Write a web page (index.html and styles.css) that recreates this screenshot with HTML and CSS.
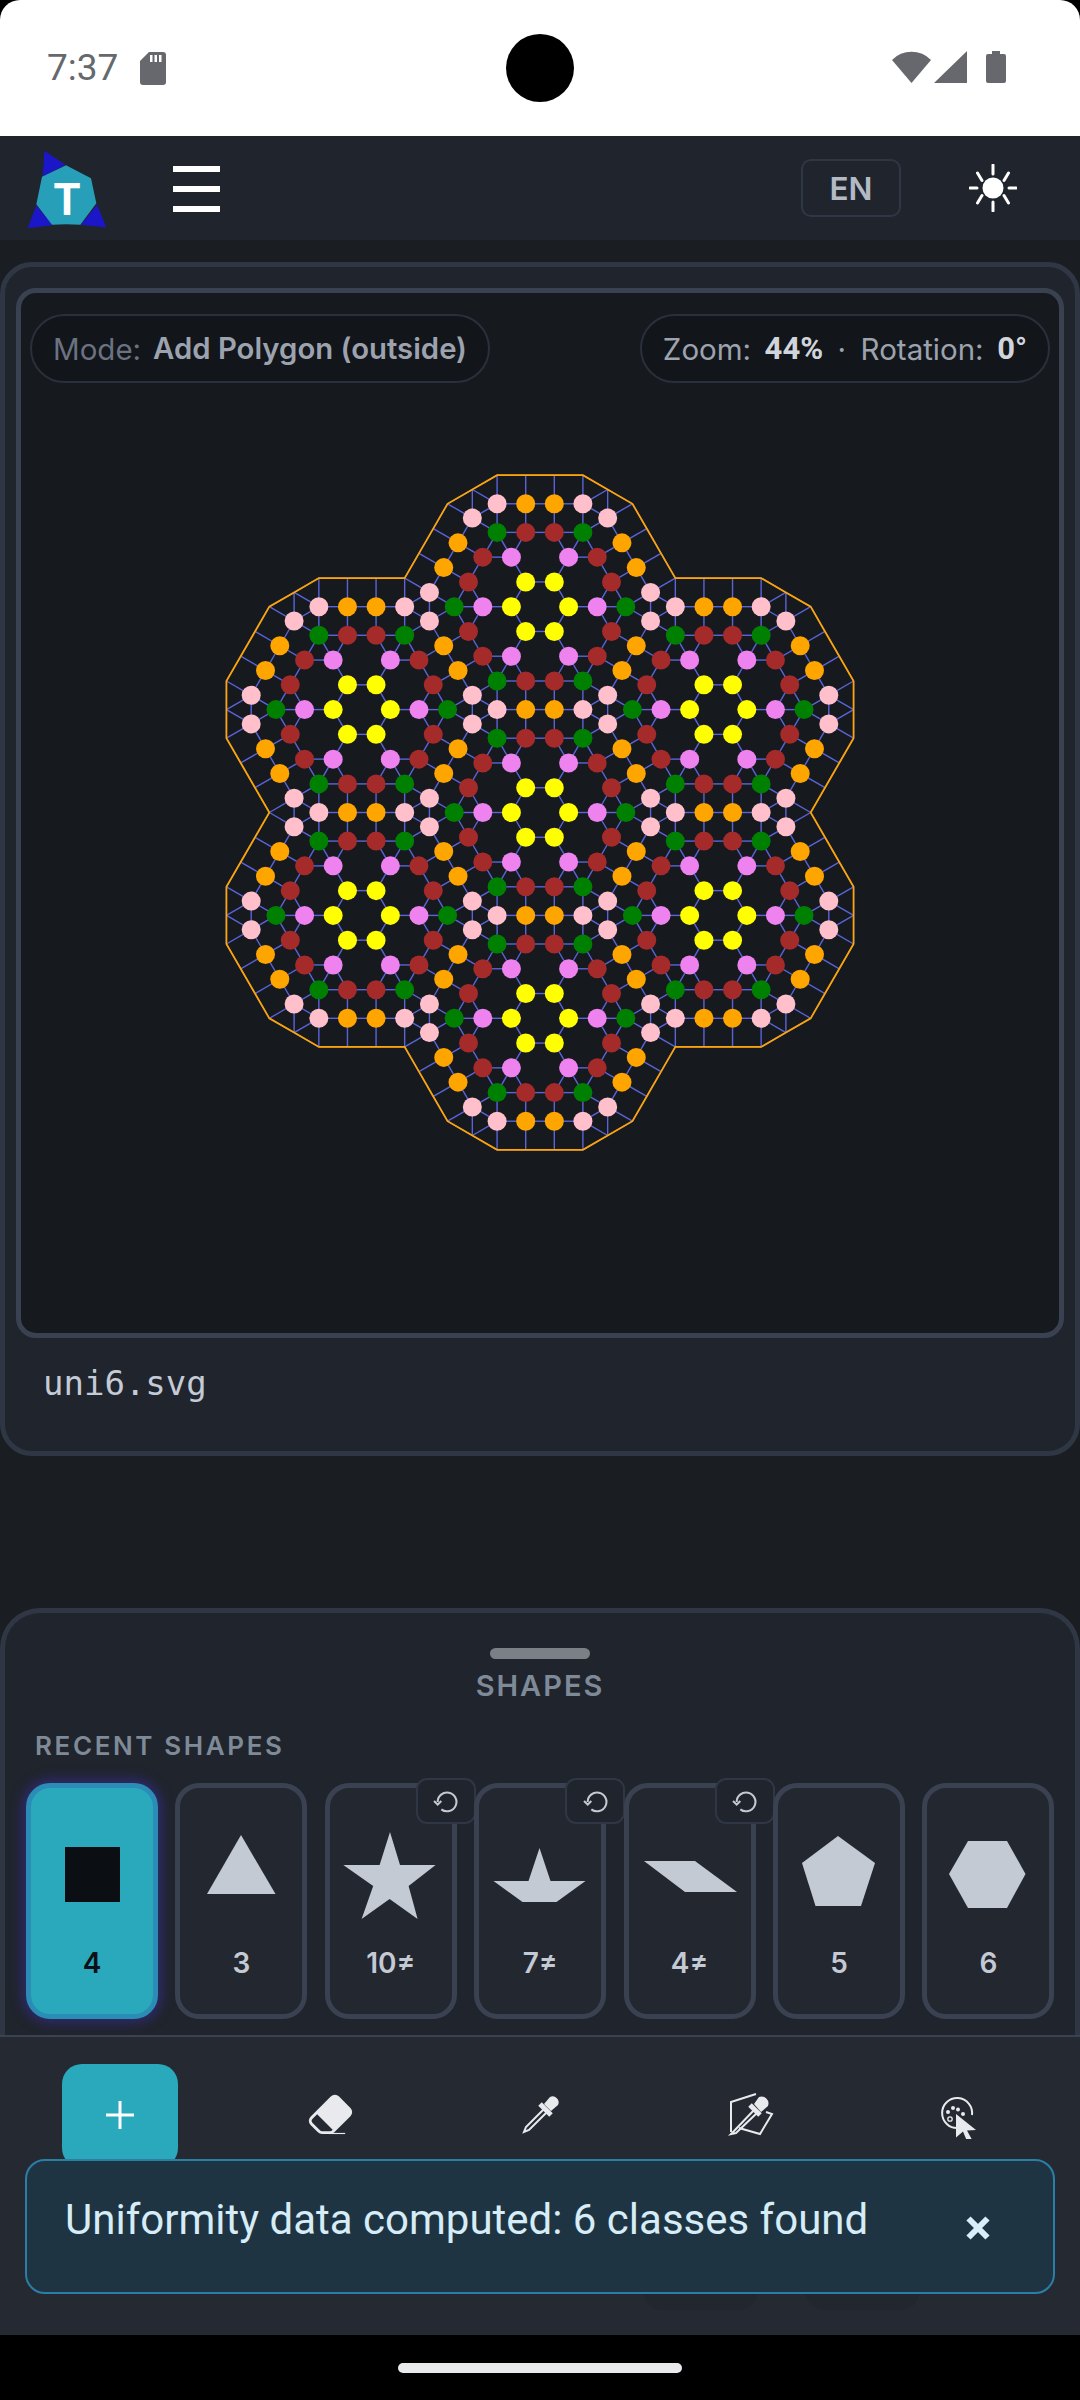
FILE: index.html
```html
<!DOCTYPE html>
<html lang="en">
<head>
  <meta charset="UTF-8">
  <meta name="viewport" content="width=device-width, initial-scale=1">
  <title>Tiling Editor</title>
  <link rel="stylesheet" href="styles.css">
</head>
<body>

  <div class="status-bar">
    <div class="status-left">
      <span class="clock">7:37</span>
      <svg class="sd-icon" viewBox="0 0 26 33"><path d="M9 0h14a3 3 0 0 1 3 3v27a3 3 0 0 1-3 3H3a3 3 0 0 1-3-3V9z"/><path class="sd-pins" d="M10 3h2.500v7H10zM14.500 3H17v7h-2.500zM19 3h2.500v7H19z"/></svg>
    </div>
    <div class="status-right">
      <svg class="wifi-icon" viewBox="0 0 39 32"><path d="M0 9a27 27 0 0 1 39 0L19.500 32z"/></svg>
      <svg class="signal-icon" viewBox="0 0 33 32"><path d="M33 0v32H0z"/></svg>
      <svg class="battery-icon" viewBox="0 0 20 32"><path d="M6 0h8v3h4a2 2 0 0 1 2 2v25a2 2 0 0 1-2 2H2a2 2 0 0 1-2-2V5a2 2 0 0 1 2-2h4z"/></svg>
    </div>
  </div>
  <div class="camera"></div>

  <header class="app-header">
    <svg class="logo" viewBox="80 38 240 236">
      <path class="logo-blue" d="M132 40l63 42-68 35zM108 203l49 60-75 9zM290 202l28 68-76-8z"/>
      <path class="logo-teal" d="M197 83l75 39 16 75-48 65q-42-3-85 0l-47-62 17-82z"/>
      <text class="logo-t" x="200" y="231" text-anchor="middle">T</text>
    </svg>
    <div class="menu-btn"><span></span><span></span><span></span></div>
    <div class="header-right">
      <div class="lang-btn">EN</div>
      <svg class="sun-icon" viewBox="0 0 48 48">
        <circle cx="24" cy="24" r="10.500"/>
        <path d="M24 1v9M24 38v9M1 24h7M40 24h7M8.500 9l4.500 7.500M39.500 9L35 16.500M8.500 39l4.500-7.500M39.500 39L35 31.500"/>
      </svg>
    </div>
  </header>

  <main class="workspace">
    <section class="canvas-card">
      <div class="canvas-box">
        <svg id="tiling" class="tiling"></svg>
        <div class="canvas-pills">
          <div class="pill pill-mode"><span>Mode:</span><b>Add Polygon (outside)</b></div>
          <div class="pill pill-view"><span>Zoom:</span><b>44%</b><i>·</i><span>Rotation:</span><b>0°</b></div>
        </div>
      </div>
      <div class="file-name">uni6.svg</div>
    </section>

    <section class="sheet">
      <div class="handle"></div>
      <div class="sheet-title">SHAPES</div>
      <div class="section-label">RECENT SHAPES</div>
      <div class="shape-row">
        <div class="chip active">
          <svg class="shape" viewBox="0 0 122 100"><path d="M34 17h55v55H34z"/></svg>
          <div class="chip-label">4</div>
        </div>
        <div class="chip">
          <svg class="shape" viewBox="0 0 122 100"><path d="M61 5l34.500 59H27z"/></svg>
          <div class="chip-label">3</div>
        </div>
        <div class="chip">
          <div class="reset-badge"><svg viewBox="0 0 24 24"><path d="M4.500 12.500A9 9 0 1 1 8 19.500M1 11.500l3.500 3.500L8 11.500"/></svg></div>
          <svg class="shape" viewBox="0 0 122 100"><path d="M60 2l10 33h35.600L78.600 56l9 33-28-20-28 20 11.600-33-29.900-21h36.300z"/></svg>
          <div class="chip-label">10≠</div>
        </div>
        <div class="chip">
          <div class="reset-badge"><svg viewBox="0 0 24 24"><path d="M4.500 12.500A9 9 0 1 1 8 19.500M1 11.500l3.500 3.500L8 11.500"/></svg></div>
          <svg class="shape" viewBox="0 0 122 100"><path d="M60.500 18l11 33h35l-29 21h-34l-29-21h35z"/></svg>
          <div class="chip-label">7≠</div>
        </div>
        <div class="chip">
          <div class="reset-badge"><svg viewBox="0 0 24 24"><path d="M4.500 12.500A9 9 0 1 1 8 19.500M1 11.500l3.500 3.500L8 11.500"/></svg></div>
          <svg class="shape" viewBox="0 0 122 100"><path d="M15 31h51l42 31H56z"/></svg>
          <div class="chip-label">4≠</div>
        </div>
        <div class="chip">
          <svg class="shape" viewBox="0 0 122 100"><path d="M60 6l37 27-14 43H37.500L24 33z"/></svg>
          <div class="chip-label">5</div>
        </div>
        <div class="chip">
          <svg class="shape" viewBox="0 0 122 100"><path d="M41 11h39l18.500 33L80 78H41L22 44z"/></svg>
          <div class="chip-label">6</div>
        </div>
      </div>
    </section>
  </main>

  <section class="toolbar">
    <div class="tool-row">
      <div class="tool active">
        <svg class="plus-icon" viewBox="0 0 30 30"><path d="M15 1v28M1 15h28"/></svg>
      </div>
      <div class="tool">
        <svg class="eraser-icon" viewBox="0 0 16 16"><path d="M8.086 2.207a2 2 0 0 1 2.828 0l3.879 3.879a2 2 0 0 1 0 2.828l-5.500 5.500A2 2 0 0 1 7.879 15H5.120a2 2 0 0 1-1.414-.586l-2.500-2.500a2 2 0 0 1 0-2.828l6.879-6.879zm.660 11.340L3.453 8.254 1.914 9.793a1 1 0 0 0 0 1.414l2.500 2.500a1 1 0 0 0 .707.293H7.880a1 1 0 0 0 .707-.293l.160-.160z"/><path d="M7.500 14.600h5.500v.400H7.500z"/></svg>
      </div>
      <div class="tool">
        <svg class="tool-icon" viewBox="0 0 48 48">
          <path class="icon-line" d="M29 17L10 36l-2 5 5-2 19-19"/>
          <path class="icon-line thick" d="M24 13l11 11"/>
          <path class="icon-fill" d="M28 13l6-7a6 6 0 0 1 8 8l-7 6z"/>
        </svg>
      </div>
      <div class="tool">
        <svg class="tool-icon" viewBox="0 0 48 48">
          <path class="icon-line" d="M5 41V11l25-8M40 21l6 2-12 20-21-6"/>
          <path class="icon-line" d="M29 18L8 40l-3 3 5-1 23-22"/>
          <path class="icon-line thick" d="M24 14l10 10"/>
          <path class="icon-fill" d="M28 13l5-7a7 7 0 0 1 9 9l-7 6z"/>
        </svg>
      </div>
      <div class="tool tool-palette">
        <svg class="tool-icon" viewBox="0 0 48 48">
          <path class="icon-line" d="M18 37A15 15 0 1 1 32 24"/>
          <circle class="icon-fill" cx="8" cy="21" r="2"/>
          <circle class="icon-fill" cx="13" cy="17" r="2"/>
          <circle class="icon-fill" cx="18" cy="18.500" r="2"/>
          <circle class="icon-fill" cx="23" cy="23" r="2"/>
          <circle class="icon-line thin" cx="10" cy="28" r="2.200"/>
          <path class="icon-fill" d="M16 23l20 16-9 .5 6 11-5 2-5-12-7 6z"/>
        </svg>
      </div>
    </div>
    <div class="tool-row-faint"><div class="faint-btn"></div><div class="faint-btn"></div></div>
  </section>

  <div class="toast">
    <span class="toast-text">Uniformity data computed: 6 classes found</span>
    <svg class="toast-close" viewBox="0 0 24 24"><path d="M2.500 2.500l19 19M21.500 2.500l-19 19"/></svg>
  </div>

  <div class="nav-bar"><div class="nav-pill"></div></div>

  <script src="tiling.js"></script>
</body>
</html>
```

FILE: styles.css
```css
* {
  box-sizing: border-box;
}

body {
  font-family: Inter, "Noto Sans", sans-serif;
  background: #000;
  margin: 0;
  width: 1080px;
  height: 2400px;
  overflow: hidden;
  position: relative;
  display: flex;
  flex-direction: column;
}

/* status bar */
.status-bar {
  height: 136px;
  flex: none;
  background: #fff;
  border-radius: 20px 20px 0 0;
  display: flex;
  justify-content: space-between;
  padding: 51px 74px 0 47px;
}

.status-left, .status-right {
  display: flex;
  align-items: flex-start;
}

.clock {
  font-family: Roboto, sans-serif;
  font-size: 37px;
  line-height: 34px;
  color: #66686d;
}

.status-bar svg {
  fill: #66686d;
}

.sd-icon {
  width: 26px;
  height: 33px;
  margin-left: 22px;
  margin-top: 1px;
}

.sd-icon .sd-pins {
  fill: #fff;
}

.wifi-icon {
  width: 39px;
  height: 32px;
}

.signal-icon {
  width: 33px;
  height: 32px;
  margin-left: 3px;
}

.battery-icon {
  width: 20px;
  height: 32px;
  margin-left: 19px;
}

.camera {
  position: absolute;
  left: 506px;
  top: 34px;
  width: 68px;
  height: 68px;
  border-radius: 50%;
  background: #000;
}

/* header */
.app-header {
  height: 104px;
  flex: none;
  background: #20242c;
  display: flex;
  align-items: center;
  padding: 0 63px 0 27px;
}

.logo {
  width: 80px;
  height: 79px;
  margin-top: 3px;
}

.logo-blue {
  fill: #1b17c8;
}

.logo-teal {
  fill: #289fb8;
}

.logo-t {
  font-family: Roboto, sans-serif;
  font-weight: 700;
  font-size: 131px;
  fill: #fff;
}

.menu-btn {
  margin-left: 66px;
  display: flex;
  flex-direction: column;
  gap: 14px;
  margin-top: 1px;
}

.menu-btn span {
  display: block;
  width: 47px;
  height: 6px;
  background: #fff;
}

.header-right {
  margin-left: auto;
  display: flex;
  align-items: center;
  gap: 68px;
}

.lang-btn {
  width: 100px;
  height: 58px;
  border: 2px solid #2f3644;
  border-radius: 10px;
  display: flex;
  align-items: center;
  justify-content: center;
  font-size: 31.500px;
  font-weight: 600;
  color: #b3bac5;
}

.sun-icon {
  width: 48px;
  height: 48px;
  fill: #fff;
  stroke: #fff;
  stroke-width: 3px;
  stroke-linecap: round;
}

.sun-icon circle {
  stroke: none;
}

/* canvas */
.workspace {
  flex: 1;
  background: #1a1d22;
  padding-top: 22px;
  display: flex;
  flex-direction: column;
  justify-content: space-between;
}

.canvas-card {
  height: 1194px;
  background: #20242c;
  border: 5px solid #2f3644;
  border-radius: 32px;
  padding: 21px 11px 0;
}

.canvas-box {
  position: relative;
  height: 1050px;
  background: #16191e;
  border: 5px solid #3a4252;
  border-radius: 20px;
}

.tiling {
  display: block;
  width: 1038px;
  height: 1040px;
}

.tiling line {
  stroke: #5a64d8;
  stroke-width: 1.4px;
}

.tiling polygon {
  fill: none;
  stroke: #ffa500;
  stroke-width: 1.7px;
}

.node-yellow { fill: #ffff00; }
.node-violet { fill: #ee82ee; }
.node-brown { fill: #a52a2a; }
.node-green { fill: #008000; }
.node-pink { fill: #ffc0cb; }
.node-orange { fill: #ffa500; }

.canvas-pills {
  position: absolute;
  top: 21px;
  left: 9px;
  right: 9px;
  display: flex;
  justify-content: space-between;
}

.pill {
  height: 69px;
  background: #12151a;
  border: 2px solid #2a303b;
  border-radius: 35px;
  display: flex;
  align-items: center;
  gap: 12px;
  padding: 0 21px;
  font-size: 29.500px;
  color: #9ca3af;
}

.pill b {
  font-family: Roboto, sans-serif;
  font-size: 31px;
  font-weight: 700;
  color: #d1d5db;
}

.pill i {
  font-style: normal;
  margin: 0 1px;
}

.pill-view {
  gap: 13.500px;
}

.pill-mode {
  color: #6b7280;
}

.pill-mode b {
  font-family: Inter, sans-serif;
  font-size: 29.300px;
  font-weight: 600;
  color: #9ca3af;
}

.file-name {
  font-family: "DejaVu Sans Mono", monospace;
  font-size: 34px;
  color: #c4cbd6;
  padding: 25px 0 0 27px;
}

/* shapes sheet */
.sheet {
  height: 427px;
  flex: none;
  overflow: hidden;
  background: #20242c;
  border: 5px solid #2f3644;
  border-bottom: none;
  border-radius: 40px 40px 0 0;
  display: flex;
  flex-direction: column;
}

.handle {
  width: 100px;
  height: 11px;
  margin: 35px auto 0;
  border-radius: 6px;
  background: #7b7f86;
}

.sheet-title {
  font-size: 29px;
  font-weight: 600;
  line-height: 34px;
  letter-spacing: 2px;
  color: #7f8a98;
  text-align: center;
  margin-top: 10px;
}

.section-label {
  font-size: 26px;
  font-weight: 600;
  line-height: 32px;
  letter-spacing: 2.600px;
  color: #7f8a98;
  margin: 27px 0 0 30px;
}

.shape-row {
  display: flex;
  gap: 17.400px;
  padding-left: 21px;
  margin-top: 21px;
}

.chip {
  position: relative;
  flex: none;
  width: 132px;
  height: 236px;
  background: #232730;
  border: 5px solid #3a4252;
  border-radius: 24px;
  padding-top: 42px;
}

.chip.active {
  background: #2aa8bc;
  border-color: #2b8cb5;
  box-shadow: 0 0 12px 4px #2d2b6e;
}

.chip-label {
  font-size: 28px;
  font-weight: 600;
  line-height: 30px;
  text-align: center;
  color: #c4cad4;
  margin-top: 18px;
}

.chip.active .chip-label {
  color: #0d1117;
}

.shape {
  display: block;
  width: 122px;
  height: 100px;
  fill: #c4cad4;
}

.chip.active .shape {
  fill: #0b0e13;
}

.reset-badge {
  position: absolute;
  top: -10px;
  right: -24px;
  width: 60px;
  height: 46px;
  background: #20242c;
  border: 2.500px solid #2f3644;
  border-radius: 11px;
  display: flex;
  align-items: center;
  justify-content: center;
}

.reset-badge svg {
  width: 25px;
  height: 25px;
  fill: none;
  stroke: #c4cad4;
  stroke-width: 2px;
}

/* toolbar */
.toolbar {
  height: 300px;
  flex: none;
  background: #252a32;
  border-top: 2px solid #3a4150;
  padding: 27px 15px 0;
}

.tool-row {
  display: grid;
  grid-template-columns: repeat(5, 1fr);
}

.tool {
  height: 104px;
  width: 116px;
  justify-self: center;
  border-radius: 20px;
  display: flex;
  align-items: center;
  justify-content: center;
}

.tool.active {
  background: #2aa8bc;
}

.plus-icon {
  width: 30px;
  height: 30px;
  margin-top: -3px;
  fill: none;
  stroke: #fff;
  stroke-width: 3px;
}

.eraser-icon {
  width: 47px;
  height: 47px;
  margin-top: -6px;
  fill: #e8eaed;
}

.tool-icon {
  width: 48px;
  height: 48px;
  margin-top: -3px;
}

.tool-palette .tool-icon {
  margin-left: 8px;
}

.icon-line {
  fill: none;
  stroke: #e8eaed;
  stroke-width: 2px;
}

.icon-line.thick {
  stroke-width: 5px;
}

.icon-line.thin {
  stroke-width: 1.300px;
}

.icon-fill {
  fill: #e8eaed;
}

.tool-row-faint {
  display: flex;
  justify-content: flex-end;
  gap: 47px;
  padding-right: 145px;
  margin-top: 38px;
}

.faint-btn {
  width: 115px;
  height: 104px;
  border-radius: 20px;
  background: #22262e;
}

/* toast over the toolbar */
.toast {
  position: absolute;
  left: 25px;
  top: 2159px;
  width: 1030px;
  height: 135px;
  background: #1f3442;
  border: 2px solid #2a7ea8;
  border-radius: 20px;
  padding: 31px 0 0 38px;
  display: flex;
  justify-content: space-between;
  font-family: Roboto, sans-serif;
  font-size: 42px;
  line-height: 56px;
  color: #d6ecf7;
}

.toast-close {
  width: 24px;
  height: 24px;
  margin: 24px 63px 0 0;
  fill: none;
  stroke: #d9eef8;
  stroke-width: 6px;
}

/* android nav */
.nav-bar {
  height: 65px;
  flex: none;
  background: #000;
  padding-top: 28px;
}

.nav-pill {
  width: 284px;
  height: 10px;
  margin: 0 auto;
  border-radius: 5px;
  background: #e8eaed;
}
```

FILE: tiling.js
```js
// uni6 tiling: seven stars on a hex lattice, each star has D6 symmetry
const A = 28.6; // edge length in px
const CX = 519;
const CY = 519.5;
const S3 = Math.sqrt(3);
const L = 3 * S3 + 2; // lattice spacing in edge lengths

const seeds = [
  ["yellow", 1, 0],
  ["violet", 2, 0],
  ["brown", 2.5, S3 / 2],
  ["green", 3, 0],
  ["pink", 1.5, 1 + 1.5 * S3],
  ["orange", 0.5, 1 + 1.5 * S3],
];
// outer polygon corners, not drawn as nodes
const ringSeeds = [
  [1.5, 2 + 1.5 * S3],
  [0.5, 2 + 1.5 * S3],
  [3 + S3, 0],
];

const centers = [[0, 0]];
for (let k = 0; k < 6; k++) {
  const t = (30 + 60 * k) * Math.PI / 180;
  centers.push([L * Math.cos(t), L * Math.sin(t)]);
}

function orbit(x, y) {
  const out = [];
  for (let k = 0; k < 6; k++) {
    const t = k * Math.PI / 3;
    const c = Math.cos(t), s = Math.sin(t);
    out.push([x * c - y * s, x * s + y * c]);
    out.push([x * c + y * s, x * s - y * c]);
  }
  return out;
}

const key = (x, y) => Math.round(x * 20) + "," + Math.round(y * 20);
const nodes = new Map();
const ring = new Map();

centers.forEach(([cx, cy]) => {
  seeds.forEach(([color, x, y]) => {
    orbit(x, y).forEach(([px, py]) => {
      nodes.set(key(cx + px, cy + py), { x: cx + px, y: cy + py, color });
    });
  });
});

centers.forEach(([cx, cy]) => {
  ringSeeds.forEach(([x, y]) => {
    orbit(x, y).forEach(([px, py]) => {
      const k = key(cx + px, cy + py);
      if (!nodes.has(k)) ring.set(k, { x: cx + px, y: cy + py });
    });
  });
});

const svg = document.getElementById("tiling");
const NS = "http://www.w3.org/2000/svg";
const sx = p => (CX + p.x * A).toFixed(2);
const sy = p => (CY + p.y * A).toFixed(2);

function add(tag, attrs) {
  const el = document.createElementNS(NS, tag);
  Object.keys(attrs).forEach(k => el.setAttribute(k, attrs[k]));
  svg.appendChild(el);
}

const all = [...nodes.values(), ...ring.values()];
for (let i = 0; i < all.length; i++) {
  for (let j = i + 1; j < all.length; j++) {
    const d = Math.hypot(all[i].x - all[j].x, all[i].y - all[j].y);
    if (Math.abs(d - 1) < 0.03) {
      add("line", { x1: sx(all[i]), y1: sy(all[i]), x2: sx(all[j]), y2: sy(all[j]) });
    }
  }
}

const outline = [...ring.values()].sort((a, b) => Math.atan2(a.y, a.x) - Math.atan2(b.y, b.x));
add("polygon", { points: outline.map(p => sx(p) + "," + sy(p)).join(" ") });

nodes.forEach(n => {
  add("circle", { cx: sx(n), cy: sy(n), r: 9.5, class: "node-" + n.color });
});
```
